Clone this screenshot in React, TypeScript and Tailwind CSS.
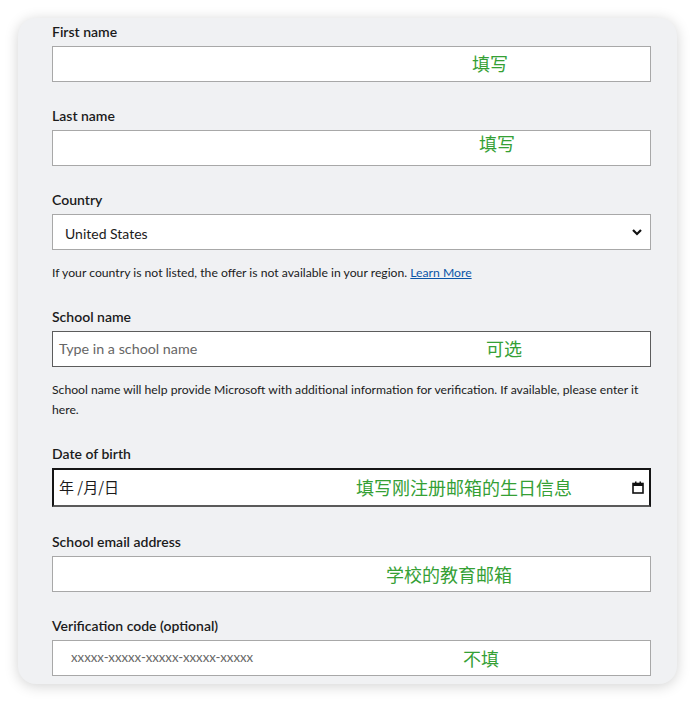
import { ReactNode } from 'react'

const font = { fontFamily: 'Lato, "Noto Sans CJK SC", sans-serif' }

function Note({ text, className }: { text: string; className: string }) {
  return (
    <span
      className={`absolute text-[18px] font-normal text-[#35a035] leading-none whitespace-nowrap ${className}`}
      style={{ fontFamily: '"Noto Sans CJK SC", sans-serif' }}
    >
      {text}
    </span>
  )
}

function Label({ children }: { children: ReactNode }) {
  return <div className="text-[14px] font-semibold text-[#1b1b1b] leading-[20px] mb-[4px]">{children}</div>
}

export default function App() {
  return (
    <div className="w-[695px] h-[702px] bg-white pt-[18px] overflow-hidden" style={font}>
      <div className="ml-[18px] w-[659px] h-[666px] rounded-[18px] bg-[#f0f1f3] shadow-[0_2px_14px_rgba(0,0,0,0.18)] pt-[4px] pl-[34px] pr-[26px]">
        <Label>First name</Label>
        <div className="relative h-[36px] bg-white border border-[#a8a8a8]">
          <Note text="填写" className="left-[419px] top-[7px]" />
        </div>

        <div className="mt-[24px]">
          <Label>Last name</Label>
          <div className="relative h-[36px] bg-white border border-[#a8a8a8]">
            <Note text="填写" className="left-[426px] top-[3px]" />
          </div>
        </div>

        <div className="mt-[24px]">
          <Label>Country</Label>
          <div className="relative h-[36px] bg-white border border-[#a8a8a8] flex items-center pl-[12px] pr-[7px]">
            <span className="text-[14px] text-[#1b1b1b] flex-1 pt-[2px]">United States</span>
            <svg width="12" height="10" viewBox="0 0 12 10">
              <path d="M2 3 L6 7 L10 3" fill="none" stroke="#111" strokeWidth="2.2" />
            </svg>
          </div>
          <p className="mt-[14px] text-[12.2px] leading-[18px] text-[#1b1b1b]">
            If your country is not listed, the offer is not available in your region.{' '}
            <a className="text-[#0b55a8] underline">Learn More</a>
          </p>
        </div>

        <div className="mt-[25px]">
          <Label>School name</Label>
          <div className="relative h-[36px] bg-white border border-[#5c5c5c] flex items-center pl-[6px]">
            <span className="text-[14.3px] text-[#666]">Type in a school name</span>
            <Note text="可选" className="left-[433px] top-[7px]" />
          </div>
          <p className="mt-[13px] text-[12.2px] leading-[20px] text-[#1b1b1b]">
            School name will help provide Microsoft with additional information for verification. If available, please enter it here.
          </p>
        </div>

        <div className="mt-[24px]">
          <Label>Date of birth</Label>
          <div className="relative h-[39px] bg-white border-2 border-[#151515] border-b-[#5a5a5a] flex items-center pl-[5px] pr-[5px]">
            <span className="text-[15px] text-[#1b1b1b] flex-1" style={{ fontFamily: '"Noto Sans CJK SC", sans-serif' }}>
              年 /月/日
            </span>
            <svg width="12" height="13" viewBox="0 0 12 13">
              <rect x="1" y="2.5" width="10" height="9.5" fill="none" stroke="#111" strokeWidth="1.6" />
              <rect x="1" y="2.5" width="10" height="2.5" fill="#111" />
              <rect x="3" y="0.5" width="1.5" height="2.5" fill="#111" />
              <rect x="7.5" y="0.5" width="1.5" height="2.5" fill="#111" />
            </svg>
            <Note text="填写刚注册邮箱的生日信息" className="left-[302px] top-[8px]" />
          </div>
        </div>

        <div className="mt-[25px]">
          <Label>School email address</Label>
          <div className="relative h-[36px] bg-white border border-[#a8a8a8]">
            <Note text="学校的教育邮箱" className="left-[333px] top-[8px]" />
          </div>
        </div>

        <div className="mt-[24px]">
          <Label>Verification code (optional)</Label>
          <div className="relative h-[36px] bg-white border border-[#a8a8a8] flex items-center pl-[18px]">
            <span className="text-[13.2px] text-[#666]">xxxxx-xxxxx-xxxxx-xxxxx-xxxxx</span>
            <Note text="不填" className="left-[410px] top-[8px]" />
          </div>
        </div>
      </div>
    </div>
  )
}
